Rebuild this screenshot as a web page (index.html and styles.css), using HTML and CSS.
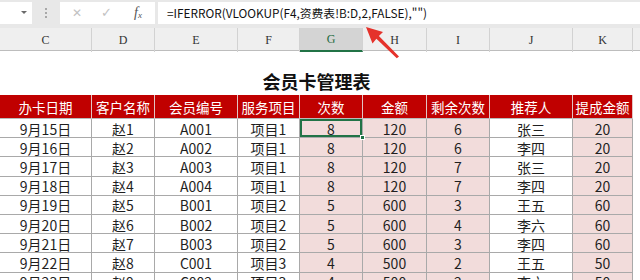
FILE: index.html
```html
<!DOCTYPE html>
<html lang="zh-CN">
<head>
<meta charset="utf-8">
<title>会员卡管理表</title>
<link rel="stylesheet" href="styles.css">
</head>
<body>
<div class="fbar">
  <div class="namebox"><span class="dd"></span></div>
  <div class="grip"><span></span><span></span><span></span></div>
  <div class="fxbox">
    <span class="ic x">✕</span>
    <span class="ic ok">✓</span>
    <span class="ic fx"><i>f</i><sub>x</sub></span>
  </div>
  <div class="input">=IFERROR(VLOOKUP(F4,资费表!B:D,2,FALSE),"")</div>
</div>
<div class="colhead">
  <div>C</div><div>D</div><div>E</div><div>F</div><div class="sel">G</div><div>H</div><div>I</div><div>J</div><div>K</div><div class="rest"></div>
</div>
<div class="titlearea"><div class="title">会员卡管理表</div></div>
<div class="sheet">
  <div class="c h">办卡日期</div><div class="c h">客户名称</div><div class="c h">会员编号</div><div class="c h">服务项目</div><div class="c h">次数</div><div class="c h">金额</div><div class="c h">剩余次数</div><div class="c h">推荐人</div><div class="c h">提成金额</div>

  <div class="c">9月15日</div><div class="c">赵1</div><div class="c">A001</div><div class="c">项目1</div><div class="c p active">8</div><div class="c p">120</div><div class="c p">6</div><div class="c">张三</div><div class="c p">20</div>
  <div class="c">9月16日</div><div class="c">赵2</div><div class="c">A002</div><div class="c">项目1</div><div class="c p">8</div><div class="c p">120</div><div class="c p">6</div><div class="c">李四</div><div class="c p">20</div>
  <div class="c">9月17日</div><div class="c">赵3</div><div class="c">A003</div><div class="c">项目1</div><div class="c p">8</div><div class="c p">120</div><div class="c p">7</div><div class="c">张三</div><div class="c p">20</div>
  <div class="c">9月18日</div><div class="c">赵4</div><div class="c">A004</div><div class="c">项目1</div><div class="c p">8</div><div class="c p">120</div><div class="c p">7</div><div class="c">李四</div><div class="c p">20</div>
  <div class="c">9月19日</div><div class="c">赵5</div><div class="c">B001</div><div class="c">项目2</div><div class="c p">5</div><div class="c p">600</div><div class="c p">3</div><div class="c">王五</div><div class="c p">60</div>
  <div class="c">9月20日</div><div class="c">赵6</div><div class="c">B002</div><div class="c">项目2</div><div class="c p">5</div><div class="c p">600</div><div class="c p">4</div><div class="c">李六</div><div class="c p">60</div>
  <div class="c">9月21日</div><div class="c">赵7</div><div class="c">B003</div><div class="c">项目2</div><div class="c p">5</div><div class="c p">600</div><div class="c p">3</div><div class="c">李四</div><div class="c p">60</div>
  <div class="c">9月22日</div><div class="c">赵8</div><div class="c">C001</div><div class="c">项目3</div><div class="c p">4</div><div class="c p">500</div><div class="c p">2</div><div class="c">王五</div><div class="c p">50</div>
  <div class="c">9月23日</div><div class="c">赵9</div><div class="c">C002</div><div class="c">项目3</div><div class="c p">4</div><div class="c p">500</div><div class="c p">2</div><div class="c">李六</div><div class="c p">50</div>
</div>
<svg class="arrow" width="50" height="42" viewBox="0 0 50 42">
  <polygon points="11,7 28,12 23.9,16 44,36.5 41.8,38.2 21.4,18.8 17.5,23.5" fill="#e5322b"/>
</svg>
</body>
</html>
```
FILE: styles.css
```css
html, body {
  margin: 0;
  padding: 0;
}
body {
  width: 640px;
  height: 280px;
  overflow: hidden;
  background: #fff;
  font-family: "Noto Sans CJK SC", "Noto Sans", sans-serif;
  color: #1f1f1f;
  position: relative;
}

/* formula bar */
.fbar {
  display: flex;
  height: 28px;
  box-sizing: border-box;
  padding-top: 2px;
  padding-bottom: 4px;
  background: #e8e8e8;
}
.namebox {
  width: 32px;
  background: #fff;
  position: relative;
}
.dd {
  position: absolute;
  left: 21px;
  top: 9px;
  border-left: 3px solid transparent;
  border-right: 3px solid transparent;
  border-top: 3px solid #6a6a6a;
}
.grip {
  width: 28px;
  display: flex;
  flex-direction: column;
  align-items: center;
  justify-content: center;
  gap: 2px;
}
.grip span {
  width: 2px;
  height: 2px;
  background: #a8a8a8;
}
.fxbox {
  width: 95px;
  background: #fff;
  display: flex;
  align-items: center;
  position: relative;
}
.ic {
  position: absolute;
  top: 0;
  line-height: 22px;
  font-family: "DejaVu Sans", sans-serif;
}
.x {
  left: 12px;
  font-size: 12px;
  color: #c2c2c2;
}
.ok {
  left: 41px;
  font-size: 13px;
  color: #c2c2c2;
}
.fx {
  left: 74px;
  font-family: "Liberation Serif", serif;
  font-size: 14px;
  color: #555;
}
.fx sub {
  font-size: 9px;
  vertical-align: -1px;
  font-style: italic;
}
.input {
  flex: 1;
  margin-left: 3px;
  background: #fff;
  padding-left: 9px;
  font-size: 11.8px;
  line-height: 22px;
  color: #111;
  white-space: nowrap;
}

/* column headers */
.colhead {
  display: grid;
  grid-template-columns: 92px 63px 83px 62px 63px 64px 63px 83px 60px 1fr;
  height: 23px;
  box-sizing: border-box;
  background: #efefef;
  border-bottom: 1px solid #bdbdbd;
}
.colhead div {
  border-right: 1px solid #d2d2d2;
  text-align: center;
  font-family: "Liberation Serif", serif;
  font-size: 12px;
  line-height: 24px;
  color: #333;
}
.colhead .sel {
  background: #d4d4d4;
  color: #1e6b40;
  border-bottom: 2px solid #217346;
  line-height: 22px;
}
.colhead .rest {
  border-right: none;
}

/* title */
.titlearea {
  height: 44px;
  width: 633px;
  display: flex;
  align-items: flex-end;
  justify-content: center;
}
.title {
  font-size: 18px;
  font-weight: bold;
  line-height: 24px;
  padding-bottom: 2px;
  color: #111;
}

/* table */
.sheet {
  display: grid;
  grid-template-columns: 92px 63px 83px 62px 63px 64px 63px 83px 60px;
  grid-template-rows: 24px repeat(9, 19.2px);
  width: 633px;
}
.c {
  box-sizing: border-box;
  border-right: 1px solid #a9a9a9;
  border-bottom: 1px solid #a9a9a9;
  display: flex;
  align-items: center;
  justify-content: center;
  font-size: 14px;
  padding-top: 1px;
  white-space: nowrap;
  position: relative;
}
.h {
  background: #c00000;
  color: #fff;
  border-right-color: #e2c4c4;
  border-bottom-color: #b9b9b9;
  font-size: 13.5px;
}
.p {
  background: #f2dcdb;
}
.active {
  box-shadow: inset 0 0 0 2px #217346;
}
.active::after {
  content: "";
  position: absolute;
  right: -3px;
  bottom: -3px;
  width: 5px;
  height: 5px;
  background: #217346;
  border: 1px solid #fff;
  box-sizing: border-box;
  z-index: 2;
}

.arrow {
  position: absolute;
  left: 355px;
  top: 20px;
}
```
